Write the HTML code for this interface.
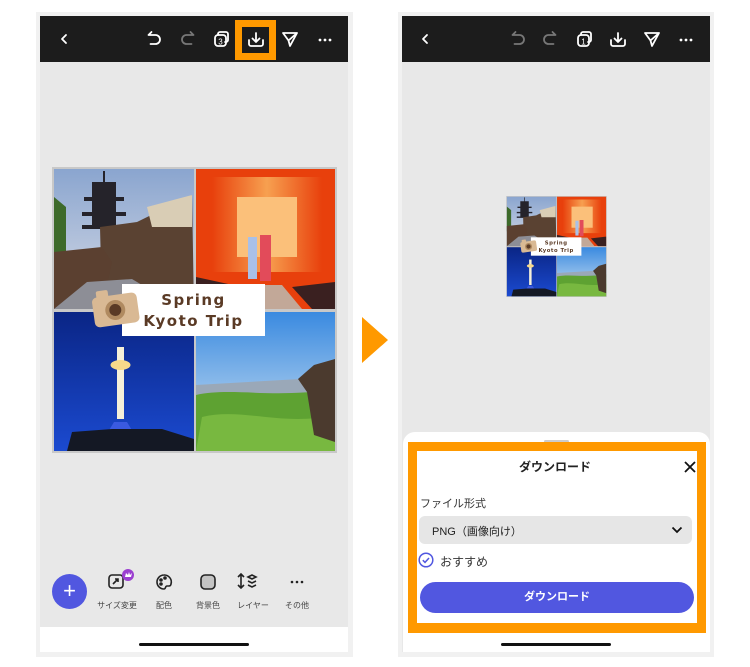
<!DOCTYPE html>
<html><head><meta charset="utf-8"><style>
*{margin:0;padding:0;box-sizing:border-box}
body{width:750px;height:667px;background:#fff;position:relative;overflow:hidden;font-family:"Liberation Sans","Noto Sans CJK JP",sans-serif}
.a{position:absolute}
.frame{background:#f1f1f1}
.hdr{background:#1c1c1c}
.canvas{background:#e8e8e8}
.wb{background:#fff}
.bar{background:#111;height:3px;border-radius:2px}
.lbl{font-size:8px;color:#444;text-align:center;width:50px}
</style></head><body>

<!-- LEFT PHONE -->
<div class="a frame" style="left:36px;top:12px;width:317px;height:645px"></div>
<div class="a canvas" style="left:40px;top:61px;width:308px;height:567px"></div>
<div class="a wb" style="left:40px;top:627px;width:308px;height:25px"></div>
<div class="a bar" style="left:139px;top:643px;width:110px"></div>
<div class="a hdr" style="left:40px;top:16px;width:308px;height:46px"></div>
<div class="a" style="left:235px;top:20px;width:41px;height:40px;background:#ff9900"></div>
<div class="a" style="left:242px;top:27px;width:27px;height:26px;background:#1c1c1c"></div>
<svg class="a" style="left:40px;top:16px" width="308" height="46" viewBox="0 0 308 46" fill="none" stroke="#fff" stroke-width="1.8" stroke-linecap="round" stroke-linejoin="round">
<path d="M26 19l-4 4 4 4"/>
<path d="M112 19h-3.5l3-3M108.5 19h7a4.5 4.5 0 010 9h-5"/>
<path stroke="#777" d="M150 19h3.5l-3-3M153.5 19h-7a4.5 4.5 0 000 9h5"/>
<rect x="175" y="19" width="11" height="11" rx="3"/><path d="M178 19v-1a2 2 0 012-2h6a2 2 0 012 2v6a2 2 0 01-2 2h-1"/>
<text x="180.5" y="28.5" font-size="8" fill="#fff" stroke="none" text-anchor="middle" font-family="Liberation Sans">3</text>
<path d="M216 17v9M212.5 22.5l3.5 3.5 3.5-3.5M209 24v4a2 2 0 002 2h10a2 2 0 002-2v-4"/>
<path d="M243 17l14 0-7 13-1.5-5.5z M248.5 24.5l8.5-7.5"/>
<circle cx="280" cy="24" r="1.4" fill="#fff" stroke="none"/><circle cx="285" cy="24" r="1.4" fill="#fff" stroke="none"/><circle cx="290" cy="24" r="1.4" fill="#fff" stroke="none"/>
</svg>

<!-- collage left -->
<svg class="a" style="left:52px;top:167px" width="285" height="286" viewBox="0 0 285 286">
<defs>
<linearGradient id="sk1" x1="0" y1="0" x2="0" y2="1"><stop offset="0" stop-color="#8aa5cf"/><stop offset="1" stop-color="#d8dce6"/></linearGradient>
<linearGradient id="bl" x1="0" y1="0" x2="0" y2="1"><stop offset="0" stop-color="#0a2585"/><stop offset="1" stop-color="#1b4ad0"/></linearGradient>
<linearGradient id="sk4" x1="0" y1="0" x2="0" y2="1"><stop offset="0" stop-color="#3a8ae0"/><stop offset="1" stop-color="#d5e6f3"/></linearGradient>
<linearGradient id="tor" x1="0" y1="0" x2="1" y2="0"><stop offset="0" stop-color="#e8400c"/><stop offset=".5" stop-color="#f7a050"/><stop offset="1" stop-color="#e8400c"/></linearGradient>
</defs>
<g id="col">
<rect width="285" height="286" fill="#c8c8c8"/>
<rect x="2" y="2" width="140" height="140" fill="url(#sk1)"/>
<path d="M2 30 L14 40 L14 90 L2 100z" fill="#3d6a2a"/>
<path d="M40 15h24v45h-24z M32 30h40v4h-40z M30 45h44v4h-44z M30 58h44v4h-44z" fill="#25232a"/>
<path d="M51 4h2v14h-2z" fill="#25232a"/>
<path d="M48 60 L85 55 L140 28 L142 140 L50 140z" fill="#5a4232"/>
<path d="M95 40 L140 28 L140 60 L100 60z" fill="#d9cdb5"/>
<path d="M2 85 L50 80 L60 95 L50 142 L2 142z" fill="#5b4030"/>
<path d="M2 142 L35 115 L80 112 L130 142z" fill="#8d8e96"/>
<rect x="144" y="2" width="139" height="140" fill="#e8400c"/>
<path d="M160 10h110v95h-110z" fill="url(#tor)"/>
<path d="M185 30h60v60h-60z" fill="#fbc07a"/>
<path d="M144 110 L190 120 L180 142 L144 142z M283 115 L240 120 L260 142 L283 142z" fill="#3a2020"/>
<path d="M185 142 L200 118 L230 118 L250 142z" fill="#c2a898"/>
<rect x="196" y="70" width="9" height="42" fill="#a9c0e8"/><rect x="208" y="68" width="11" height="46" fill="#e24b5a"/>
<rect x="2" y="145" width="140" height="139" fill="url(#bl)"/>
<rect x="65" y="180" width="7" height="72" fill="#f5f0d8"/><ellipse cx="68.5" cy="198" rx="10" ry="5" fill="#f7d98a"/>
<path d="M62 255h13l6 10h-25z" fill="#3a5ae0"/>
<path d="M15 284 L20 265 L60 262 L110 262 L142 272 L142 284z" fill="#141824"/>
<rect x="144" y="145" width="139" height="139" fill="url(#sk4)"/>
<path d="M144 218 L283 210 L283 230 L144 230z" fill="#9aa8b8"/>
<path d="M144 228 C180 220 220 232 283 222 L283 284 L144 284z" fill="#5ea232"/>
<path d="M150 250 C190 240 230 260 283 248 L283 284 L144 284z" fill="#78b840"/>
<path d="M246 212 L262 198 L283 192 L283 275 L262 268 L255 225z" fill="#4b3a2e"/>
<rect x="70" y="117" width="143" height="52" fill="#fff"/>
<text x="141.5" y="138" font-size="15" fill="#5a3a25" text-anchor="middle" letter-spacing="1.5" font-family="DejaVu Sans" font-weight="bold">Spring</text>
<text x="141.5" y="159" font-size="15" fill="#5a3a25" text-anchor="middle" letter-spacing="1.5" font-family="DejaVu Sans" font-weight="bold">Kyoto Trip</text>
<g transform="rotate(-8 63 141)"><rect x="41" y="128" width="45" height="30" rx="5" fill="#d9b994"/><rect x="46" y="122" width="12" height="8" rx="2" fill="#d9b994"/><circle cx="63" cy="143" r="10" fill="#b08a60"/><circle cx="63" cy="143" r="6" fill="#5a3a25"/></g>
</g>
</svg>

<!-- bottom toolbar -->
<div class="a" style="left:52px;top:574px;width:35px;height:35px;border-radius:50%;background:#5157e0;color:#fff;font-size:22px;line-height:34px;text-align:center">+</div>
<svg class="a" style="left:100px;top:566px" width="220" height="30" viewBox="0 0 220 30" fill="none" stroke="#222" stroke-width="1.6">
<rect x="9" y="9" width="14" height="13" rx="3"/><path d="M13 18l5-5M15 13h3v3"/>
<circle cx="28" cy="9" r="6" fill="#9b3fd0" stroke="none"/><path d="M25 11h6l1-4-2 2-1-3-1 3-2-2z" fill="#fff" stroke="none"/>
<path d="M64 9a7 7 0 100 14c2 0 1-3 3-3h2a2 2 0 002-2 7 7 0 00-7-9z"/><circle cx="61" cy="14" r="1" fill="#222"/><circle cx="65" cy="12" r="1" fill="#222"/><circle cx="61" cy="18" r="1" fill="#222"/>
<rect x="101" y="9" width="14" height="14" rx="4" fill="#c4c4c4"/>
<path d="M141 8v14M138 11l3-3 3 3M138 19l3 3 3-3"/><path d="M148 11l4-2 4 2-4 2z M148 15l4 2 4-2 M148 19l4 2 4-2"/>
<circle cx="192" cy="16" r="1.3" fill="#222" stroke="none"/><circle cx="197" cy="16" r="1.3" fill="#222" stroke="none"/><circle cx="202" cy="16" r="1.3" fill="#222" stroke="none"/>
</svg>
<div class="a lbl" style="left:92px;top:600px">サイズ変更</div>
<div class="a lbl" style="left:139px;top:600px">配色</div>
<div class="a lbl" style="left:183px;top:600px">背景色</div>
<div class="a lbl" style="left:228px;top:600px">レイヤー</div>
<div class="a lbl" style="left:272px;top:600px">その他</div>

<!-- arrow -->
<svg class="a" style="left:362px;top:317px" width="26" height="46"><path d="M0 0L26 23L0 46z" fill="#ff9900"/></svg>

<!-- RIGHT PHONE -->
<div class="a frame" style="left:398px;top:12px;width:316px;height:645px"></div>
<div class="a canvas" style="left:402px;top:61px;width:308px;height:591px"></div>
<div class="a hdr" style="left:402px;top:16px;width:308px;height:46px"></div>
<svg class="a" style="left:402px;top:16px" width="308" height="46" viewBox="0 0 308 46" fill="none" stroke="#fff" stroke-width="1.8" stroke-linecap="round" stroke-linejoin="round">
<path d="M25 19l-4 4 4 4"/>
<path stroke="#777" d="M114 19h-3.5l3-3M110.5 19h7a4.5 4.5 0 010 9h-5"/>
<path stroke="#777" d="M150 19h3.5l-3-3M153.5 19h-7a4.5 4.5 0 000 9h5"/>
<rect x="176" y="19" width="11" height="11" rx="3"/><path d="M179 19v-1a2 2 0 012-2h6a2 2 0 012 2v6a2 2 0 01-2 2h-1"/>
<text x="181.5" y="28.5" font-size="8" fill="#fff" stroke="none" text-anchor="middle" font-family="Liberation Sans">1</text>
<path d="M216 17v9M212.5 22.5l3.5 3.5 3.5-3.5M209 24v4a2 2 0 002 2h10a2 2 0 002-2v-4"/>
<path d="M243 17l14 0-7 13-1.5-5.5z M248.5 24.5l8.5-7.5"/>
<circle cx="279" cy="24" r="1.4" fill="#fff" stroke="none"/><circle cx="284" cy="24" r="1.4" fill="#fff" stroke="none"/><circle cx="289" cy="24" r="1.4" fill="#fff" stroke="none"/>
</svg>
<svg class="a" style="left:506px;top:196px" width="101" height="101" viewBox="0 0 285 286">
<use href="#col"/>
</svg>

<!-- sheet -->
<div class="a wb" style="left:403px;top:432px;width:307px;height:220px;border-radius:12px 12px 0 0"></div>
<div class="a" style="left:544px;top:440px;width:25px;height:3px;background:#ccc;border-radius:2px"></div>
<div class="a" style="left:408px;top:442px;width:298px;height:191px;background:#ff9900"></div>
<div class="a wb" style="left:417px;top:451px;width:280px;height:172px"></div>
<div class="a" style="left:417px;top:458px;width:276px;text-align:center;font-size:12px;font-weight:bold;color:#222">ダウンロード</div>
<svg class="a" style="left:684px;top:461px" width="12" height="12"><path d="M1 1L11 11M11 1L1 11" stroke="#111" stroke-width="1.8"/></svg>
<div class="a" style="left:420px;top:495px;font-size:11px;color:#333">ファイル形式</div>
<div class="a" style="left:419px;top:516px;width:273px;height:28px;background:#e6e6e6;border-radius:6px"></div>
<div class="a" style="left:432px;top:523px;font-size:11px;color:#222">PNG（画像向け）</div>
<svg class="a" style="left:671px;top:526px" width="12" height="8"><path d="M1.5 1.5L6 6L10.5 1.5" stroke="#111" stroke-width="1.8" fill="none"/></svg>
<svg class="a" style="left:418px;top:552px" width="16" height="16"><circle cx="8" cy="8" r="6.8" fill="none" stroke="#5157e0" stroke-width="1.5"/><path d="M4.8 8.2l2.2 2.2 4-4.4" stroke="#5157e0" stroke-width="1.5" fill="none"/></svg>
<div class="a" style="left:440px;top:553px;font-size:12px;color:#333">おすすめ</div>
<div class="a" style="left:420px;top:582px;width:274px;height:31px;background:#5157e0;border-radius:16px;color:#fff;font-size:11px;font-weight:bold;text-align:center;line-height:31px">ダウンロード</div>
<div class="a bar" style="left:501px;top:643px;width:110px"></div>
</body></html>
